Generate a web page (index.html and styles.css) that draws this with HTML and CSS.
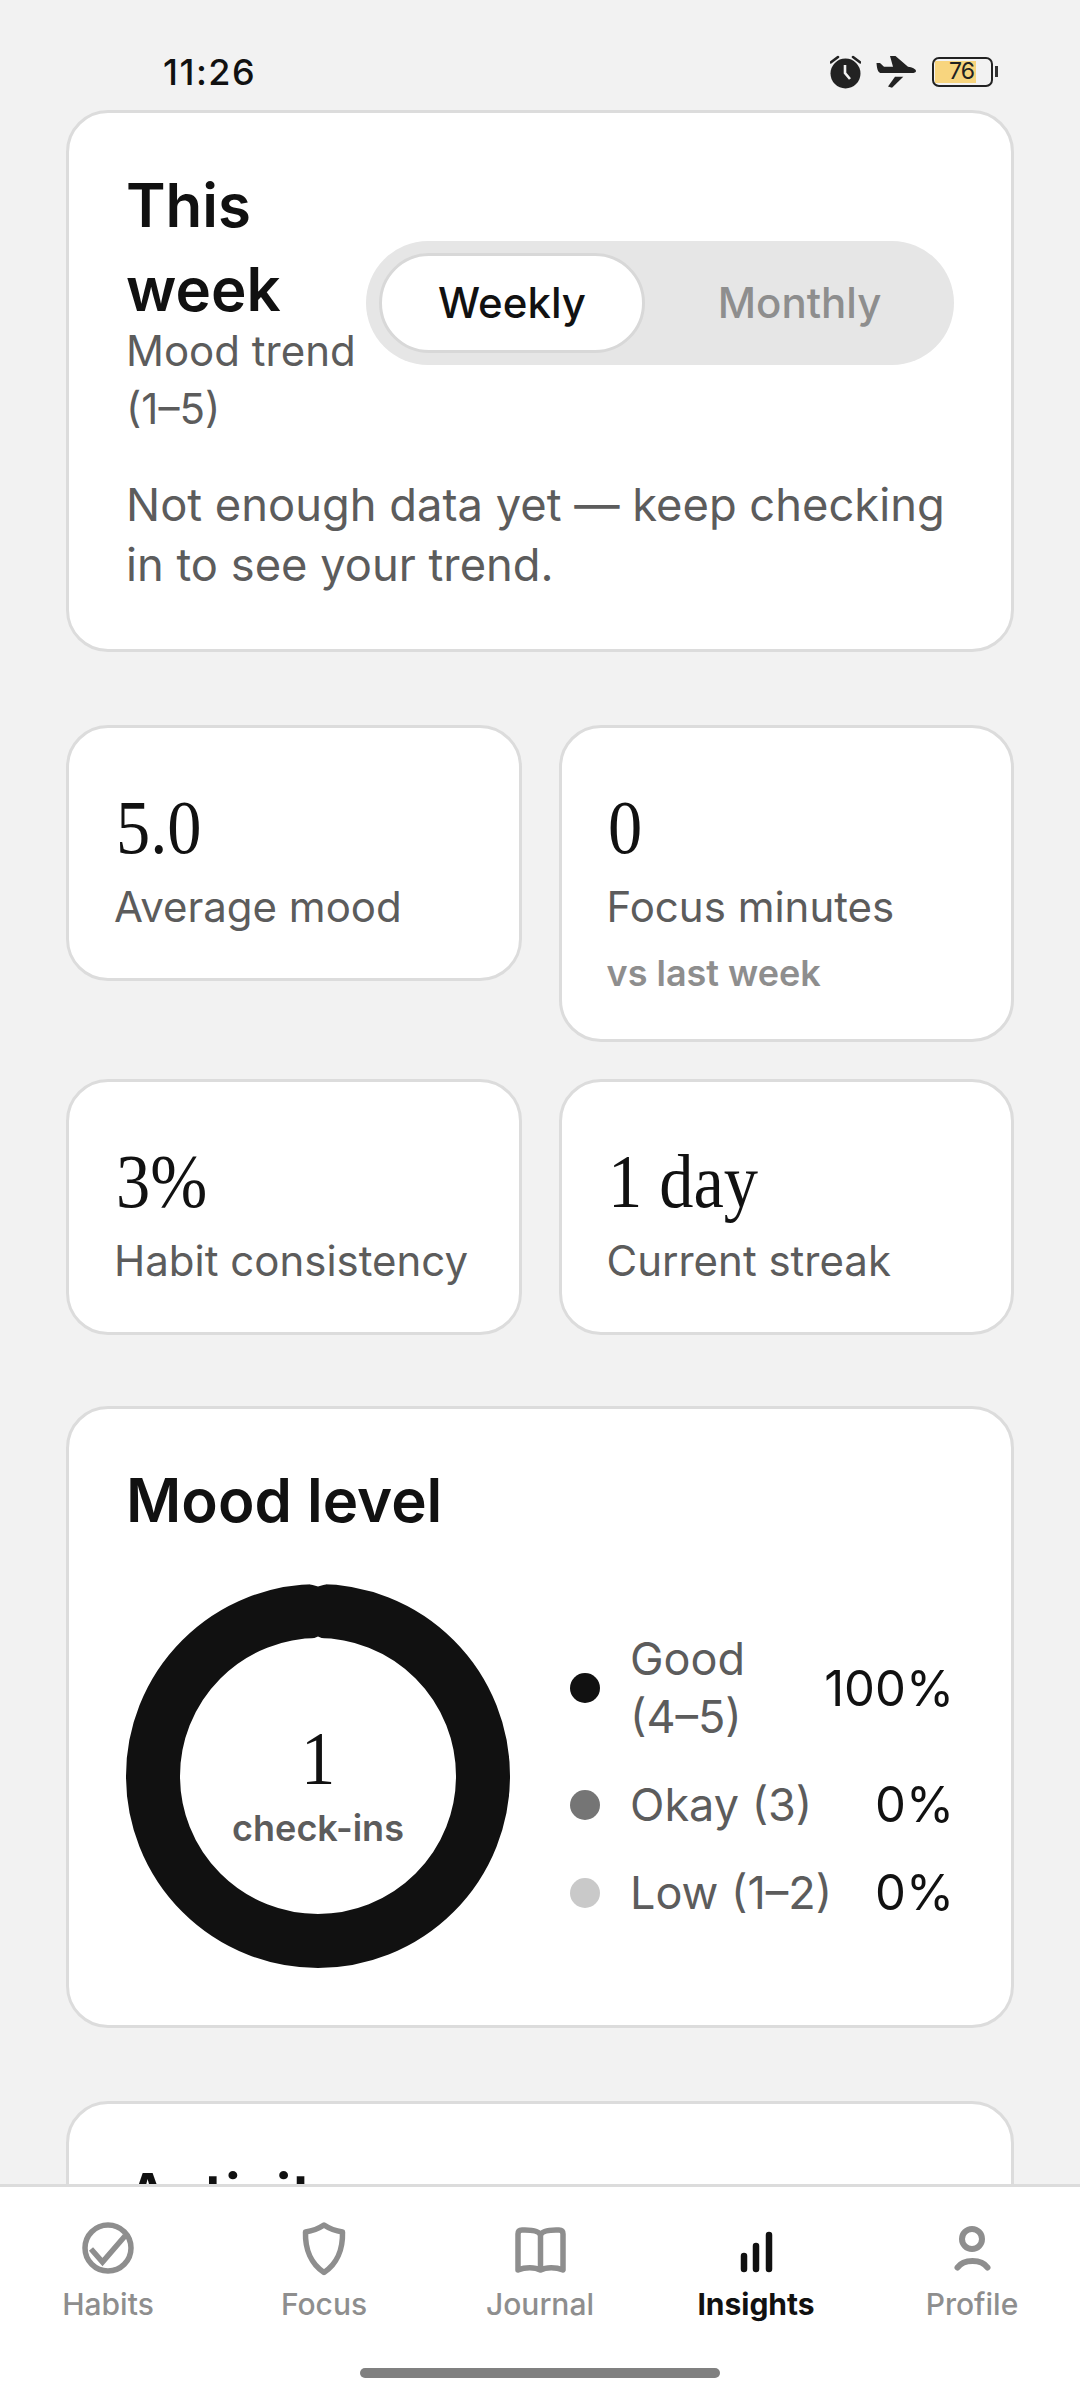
FILE: index.html
```html
<!DOCTYPE html>
<html lang="en">
<head>
<meta charset="utf-8">
<title>Insights</title>
<link rel="stylesheet" href="styles.css">
</head>
<body>
<div class="app">
  <main class="scroll">
    <header class="status">
      <span class="time">11:26</span>
      <div class="status-icons">
        <svg class="ic-alarm" viewBox="0 0 31 34"><path d="M1 7.300 8 2M30 7.300 23 2" stroke="#222" stroke-width="2.600" stroke-linecap="round" fill="none"/><circle cx="15.500" cy="18.500" r="15" fill="#222"/><path d="M15 10v8l5 6" stroke="#f2f2f2" stroke-width="2.600" fill="none"/></svg>
        <svg class="ic-plane" viewBox="0 0 40 32"><path d="M.5 7H4l4 3.700h9L14 0h5.500L32 10.700c4 .3 8 2.300 8 4.300 0 1.500-2 2-4 2H5c-2 0-4-2-4.500-10Z" fill="#222"/><path d="M19 20.700h8.300L16 31.700l-4-1.200Z" fill="#222"/></svg>
        <div class="battery"><div class="battery-body"><span class="battery-fill">76</span></div><span class="battery-tip"></span></div>
      </div>
    </header>

    <section class="card card-week">
      <div class="week-head">
        <div class="week-titles">
          <h2 class="title">This week</h2>
          <p class="sub">Mood trend <span class="nowrap">(1–5)</span></p>
        </div>
        <div class="seg">
          <span class="seg-item seg-on">Weekly</span>
          <span class="seg-item">Monthly</span>
        </div>
      </div>
      <p class="note">Not enough data yet — keep checking in to see your trend.</p>
    </section>

    <section class="stats">
      <div class="stat"><div class="stat-value">5.0</div><div class="stat-label">Average mood</div></div>
      <div class="stat"><div class="stat-value">0</div><div class="stat-label">Focus minutes</div><div class="stat-extra">vs last week</div></div>
      <div class="stat"><div class="stat-value">3%</div><div class="stat-label">Habit consistency</div></div>
      <div class="stat"><div class="stat-value">1 day</div><div class="stat-label">Current streak</div></div>
    </section>

    <section class="card card-mood">
      <h2 class="title">Mood level</h2>
      <div class="mood-body">
        <div class="donut">
          <svg class="donut-ring" viewBox="0 0 384 384" fill="none">
            <circle class="donut-arc" cx="192" cy="192" r="165"/>
            <path class="donut-nick" d="M184 -1h16v1.300l-8 2.200-8-2.200ZM186 55h12l-6-2.500Z"/>
          </svg>
          <div class="donut-center">
            <div class="donut-num">1</div>
            <div class="donut-label">check-ins</div>
          </div>
        </div>
        <ul class="legend">
          <li class="legend-row"><span class="dot dot-good"></span><span class="legend-name">Good <span class="nowrap">(4–5)</span></span><span class="legend-pct">100%</span></li>
          <li class="legend-row"><span class="dot dot-okay"></span><span class="legend-name">Okay (3)</span><span class="legend-pct">0%</span></li>
          <li class="legend-row"><span class="dot dot-low"></span><span class="legend-name">Low <span class="nowrap">(1–2)</span></span><span class="legend-pct">0%</span></li>
        </ul>
      </div>
    </section>

    <section class="card card-activity">
      <h2 class="title">Activity</h2>
    </section>
  </main>

  <nav class="tabs">
    <div class="tab">
      <svg class="tab-ic" viewBox="0 0 54 54" fill="none" stroke="#8e8e8e" stroke-width="5.500"><circle cx="27" cy="27" r="23"/><path d="M10 28 21.500 41 44 15"/></svg>
      <span>Habits</span>
    </div>
    <div class="tab">
      <svg class="tab-ic" viewBox="0 0 54 54" fill="none" stroke="#8e8e8e" stroke-width="5.500" stroke-linejoin="round"><path d="M27 4c6 4 12 6 18.500 7 .5 17-5.500 32-18.500 40.500C14 43 8 28 8.500 11 15 10 21 8 27 4Z"/></svg>
      <span>Focus</span>
    </div>
    <div class="tab">
      <svg class="tab-ic" viewBox="0 0 54 54" fill="none" stroke="#8e8e8e" stroke-width="5.500" stroke-linecap="round" stroke-linejoin="round"><path d="M27.500 14C26 10 20 9 12 9H9q-4 0-4 4v36c7-3 17-3 22.500 0 5.500-3 15.500-3 22.500 0V13q0-4-4-4h-3c-8 0-14 1-15.500 5v33"/></svg>
      <span>Journal</span>
    </div>
    <div class="tab tab-on">
      <svg class="tab-ic" viewBox="0 0 54 54" fill="none" stroke="#111" stroke-width="6.500" stroke-linecap="round"><path d="M15 35v13M27 25v23M40 14v34"/></svg>
      <span>Insights</span>
    </div>
    <div class="tab">
      <svg class="tab-ic" viewBox="0 0 54 54" fill="none" stroke="#8e8e8e" stroke-width="6" stroke-linecap="round"><circle cx="27" cy="18" r="10"/><path d="M12.500 46.500C16 41.500 21 40 27.500 40s11.500 1.500 15 6.500"/></svg>
      <span>Profile</span>
    </div>
  </nav>
  <div class="home"><span class="home-bar"></span></div>
</div>
</body>
</html>
```
FILE: styles.css
```css
* { box-sizing: border-box; }
html, body { margin: 0; padding: 0; }
body { width: 1080px; height: 2400px; overflow: hidden; font-family: Inter, "Noto Sans", sans-serif; color: #111; background: #f2f2f2; }
.app { width: 1080px; height: 2400px; display: flex; flex-direction: column; }
.scroll { flex: 1; min-height: 0; overflow: hidden; padding: 0 66px; }
.status { height: 110px; display: flex; align-items: center; justify-content: space-between; padding: 33px 16px 0 97px; }
.time { font-size: 36px; font-weight: 500; letter-spacing: 1.500px; color: #111; }
.status-icons { display: flex; align-items: center; gap: 15px; }
.ic-alarm { width: 31px; height: 34px; }
.ic-plane { width: 40px; height: 32px; margin-right: 1px; }
.battery { display: flex; align-items: center; gap: 2px; }
.battery-body { width: 61px; height: 30px; border: 2.500px solid #222; border-radius: 7px; padding: 2px 1px; display: flex; }
.battery-fill { width: 41px; background: #f8d57e; font-size: 23px; line-height: 21px; letter-spacing: -1px; padding-right: 2px; text-align: right; color: #222; }
.battery-tip { width: 3px; height: 11px; background: #333; }
.card { background: #fff; border: 3px solid #dcdcdc; border-radius: 42px; padding: 49px 57px; }
.card-week { padding-top: 50px; padding-bottom: 54px; margin-bottom: 73px; }
.week-head { display: flex; align-items: center; gap: 10px; }
.week-titles { width: 230px; flex: none; }
.title { margin: 0; font-size: 60px; font-weight: 600; line-height: 84px; color: #111; }
.sub { margin: -9px 0 0; font-size: 42px; line-height: 58px; color: #5c5c5c; }
.nowrap { white-space: nowrap; }
.seg { flex: 1; height: 124px; margin-top: 4px; background: #e6e6e6; border-radius: 62px; padding: 12px 0 12px 13px; display: flex; }
.seg-item { flex: 1; display: flex; align-items: center; justify-content: center; font-size: 42px; color: #8e8e8e; font-weight: 500; }
.seg-on { flex: none; width: 266px; background: #fff; color: #111; border: 3px solid #d8d8d8; border-radius: 50px; }
.note { margin: 37px 0 0; font-size: 45.300px; line-height: 60px; color: #5c5c5c; }
.stats { display: grid; grid-template-columns: 1fr 1fr; gap: 37px; align-items: start; margin-bottom: 71px; }
.stat { background: #fff; border: 3px solid #dcdcdc; border-radius: 42px; padding: 57px 45px 42px; }
.stat-value { font-family: "Liberation Serif", serif; font-size: 76px; line-height: 84px; margin-left: 1.500px; color: #111; transform: scaleX(.9); transform-origin: left center; }
.stat-label { font-size: 42px; line-height: 58px; color: #5c5c5c; margin-top: 9px; }
.stat-extra { font-size: 36px; line-height: 48px; font-weight: 600; color: #8e8e8e; margin-top: 13px; }
.card-mood { height: 622px; margin-bottom: 73px; }
.mood-body { display: flex; align-items: center; gap: 60px; margin-top: 42px; }
.donut { position: relative; width: 384px; height: 384px; flex: none; display: flex; align-items: center; justify-content: center; }
.donut-ring { position: absolute; inset: 0; width: 384px; height: 384px; overflow: visible; }
.donut-arc { stroke: #111; stroke-width: 54; }
.donut-nick { fill: #fff; }
.donut-center { position: relative; display: flex; flex-direction: column; align-items: center; padding-top: 14px; }
.donut-num { font-family: "Liberation Serif", serif; font-size: 76px; line-height: 84px; transform: scaleX(.9); }
.donut-label { font-size: 36px; line-height: 44px; font-weight: 600; color: #5c5c5c; margin-top: 6px; }
.legend { flex: 1; margin: 0; padding: 0; list-style: none; display: flex; flex-direction: column; gap: 29px; }
.legend-row { display: flex; align-items: center; }
.dot { width: 30px; height: 30px; border-radius: 50%; flex: none; margin-right: 30px; }
.dot-good { background: #111; }
.dot-okay { background: #757575; }
.dot-low { background: #c9c9c9; }
.legend-name { flex: 1; font-size: 45px; line-height: 58px; color: #5c5c5c; }
.legend-pct { font-size: 49px; color: #111; margin-left: 8px; }
.card-activity { height: 300px; }
.tabs { flex: none; height: 146px; background: #fff; border-top: 3px solid #dcdcdc; display: grid; grid-template-columns: repeat(5, 216px); padding-top: 34px; }
.tab { display: flex; flex-direction: column; align-items: center; font-size: 30px; line-height: 36px; color: #8e8e8e; font-weight: 500; gap: 11px; }
.tab-ic { width: 54px; height: 54px; overflow: visible; }
.tab-on { color: #111; font-weight: 700; }
.home { flex: none; height: 70px; background: #fff; display: flex; justify-content: center; padding-top: 38px; }
.home-bar { width: 360px; height: 10px; border-radius: 5px; background: #808080; }
```
